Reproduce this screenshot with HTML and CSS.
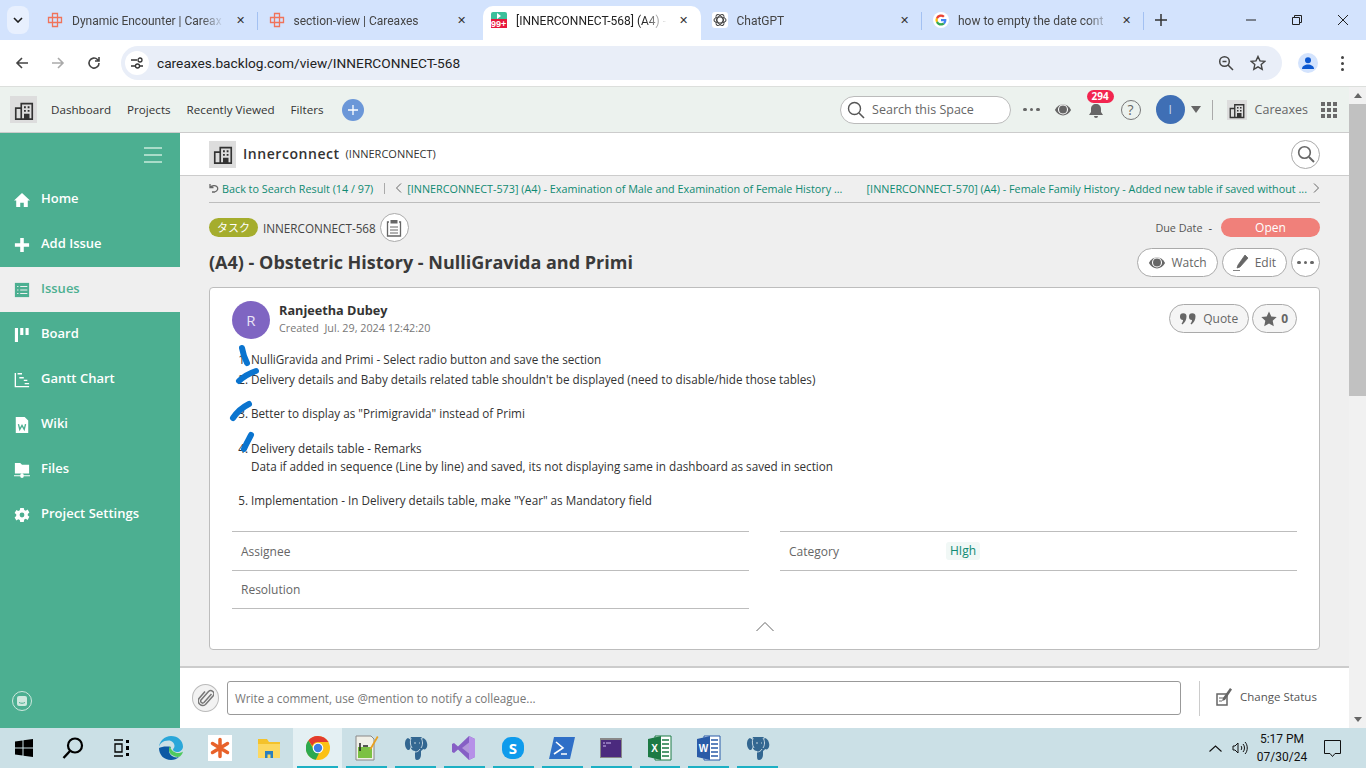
FILE: index.html
```html
<!DOCTYPE html>
<html lang="en">
<head>
<meta charset="UTF-8">
<meta name="viewport" content="width=device-width, initial-scale=1.0">
<title>[INNERCONNECT-568] (A4) - Obstetric History - NulliGravida and Primi</title>
<link rel="stylesheet" href="styles.css">
</head>
<body>
<svg class="defs" width="0" height="0">
    <symbol id="building" viewBox="0 0 24 24">
        <path d="M9 5h12v17H9zM3 10h6v12H3z" fill="none" stroke="currentColor" stroke-width="1.8"/>
        <path d="M12 8h2v2h-2zM16 8h2v2h-2zM12 12h2v2h-2zM16 12h2v2h-2zM12 16h6v6h-6z" fill="currentColor"/>
    </symbol>
    <symbol id="careaxes" viewBox="0 0 16 16">
        <path d="M5.500 1.500h5v4h4v5h-4v4h-5v-4h-4v-5h4zM5.500 5.500h5v5h-5z" fill="none" stroke="#f0735a" stroke-width="1.300"/>
    </symbol>
    <symbol id="elephant" viewBox="0 0 24 26">
        <path d="M4 3C1 4 0 9 2 13c1 2 3 3 4 1l1-9z" fill="#336791"/>
        <path d="M19 3c3 1 5 5 4 9-1 2-2 3-4 2z" fill="#336791"/>
        <path d="M7 2h10c2 1 3 4 3 8 0 3-1 5-3 6v4c0 3-2 5-4 5s-2-2-2-5v-4c-3 0-5-3-5-7 0-3 0-5 1-7z" fill="#336791"/>
        <path d="M7 3c-1 3-1 7 1 10M17 3c2 3 2 7 0 10M11 17c2 0 4-1 5-3M10 8h2M15 8h1" fill="none" stroke="#d5e3ea" stroke-width=".9"/>
    </symbol>
    <symbol id="eye" viewBox="0 0 20 20">
        <path d="M1 10c2-4 5.500-6 9-6s7 2 9 6c-2 4-5.500 6-9 6s-7-2-9-6z" fill="currentColor"/>
        <circle cx="10" cy="9.500" r="5" fill="none" stroke="#fff" stroke-width="1.200"/>
        <circle cx="10" cy="9.500" r="3" fill="currentColor"/>
    </symbol>
</svg>

<div class="tabstrip">
    <div class="tab-menu"><svg width="10" height="6" viewBox="0 0 10 6"><path d="M1 1l4 4 4-4" fill="none" stroke="#1f1f1f" stroke-width="1.600"/></svg></div>
    <div class="tab sep">
        <svg class="favicon" width="16" height="16"><use href="#careaxes"/></svg>
        <span class="tab-title">Dynamic Encounter | Careax</span>
        <span class="tab-close">&#x2715;</span>
    </div>
    <div class="tab">
        <svg class="favicon" width="16" height="16"><use href="#careaxes"/></svg>
        <span class="tab-title">section-view | Careaxes</span>
        <span class="tab-close">&#x2715;</span>
    </div>
    <div class="tab active">
        <svg class="favicon" width="16" height="16" viewBox="0 0 16 16">
            <rect width="16" height="9" rx="2" fill="#3bbf9a"/>
            <path d="M6 1v6l4-3z" fill="#fff"/>
            <rect y="7" width="16" height="9" fill="#e8173d"/>
            <text x="0" y="15" class="favicon-count">99+</text>
        </svg>
        <span class="tab-title">[INNERCONNECT-568] (A4) -</span>
        <span class="tab-close">&#x2715;</span>
    </div>
    <div class="tab sep">
        <svg class="favicon" width="16" height="16" viewBox="0 0 16 16">
            <rect width="16" height="16" rx="3" fill="#fff"/>
            <g fill="none" stroke="#444" stroke-width="1.100">
                <ellipse cx="8" cy="8" rx="6" ry="3"/>
                <ellipse cx="8" cy="8" rx="6" ry="3" transform="rotate(60 8 8)"/>
                <ellipse cx="8" cy="8" rx="6" ry="3" transform="rotate(120 8 8)"/>
            </g>
        </svg>
        <span class="tab-title">ChatGPT</span>
        <span class="tab-close">&#x2715;</span>
    </div>
    <div class="tab sep">
        <svg class="favicon" width="16" height="16" viewBox="0 0 16 16">
            <circle cx="8" cy="8" r="8" fill="#fff"/>
            <path d="M13.400 8.100c0-.4 0-.8-.1-1.200H8v2.300h3a2.600 2.600 0 0 1-1.100 1.700l1.800 1.400c1-1 1.700-2.400 1.700-4.200z" fill="#4285f4"/>
            <path d="M8 13.500c1.500 0 2.700-.5 3.700-1.300l-1.800-1.400c-.5.300-1.100.5-1.900.5-1.400 0-2.700-1-3.100-2.300L3 10.400c.9 1.900 2.800 3.100 5 3.100z" fill="#34a853"/>
            <path d="M4.900 9a3.300 3.300 0 0 1 0-2L3 5.600a5.500 5.500 0 0 0 0 4.800z" fill="#fbbc05"/>
            <path d="M8 4.700c.8 0 1.500.3 2.100.8l1.600-1.600A5.500 5.500 0 0 0 3 5.600L4.900 7C5.300 5.700 6.600 4.700 8 4.700z" fill="#ea4335"/>
        </svg>
        <span class="tab-title">how to empty the date cont</span>
        <span class="tab-close">&#x2715;</span>
    </div>
    <div class="tab-new"><svg width="12" height="12" viewBox="0 0 12 12"><path d="M6 0v12M0 6h12" stroke="#333" stroke-width="1.500"/></svg></div>
    <div class="win-controls">
        <svg width="10" height="10" viewBox="0 0 10 10"><path d="M0 5h10" stroke="#222"/></svg>
        <svg width="10" height="10" viewBox="0 0 10 10"><path d="M.5 2.500h7v7h-7zM2.500 2.500v-2h7v7h-2" fill="none" stroke="#222"/></svg>
        <svg width="10" height="10" viewBox="0 0 10 10"><path d="M0 0l10 10M10 0L0 10" stroke="#222"/></svg>
    </div>
</div>

<div class="toolbar">
    <svg width="16" height="16" viewBox="0 0 16 16"><path d="M14 8H3M8 3L3 8l5 5" fill="none" stroke="#444" stroke-width="1.600"/></svg>
    <svg width="16" height="16" viewBox="0 0 16 16"><path d="M2 8h11M8 3l5 5-5 5" fill="none" stroke="#aaa" stroke-width="1.600"/></svg>
    <svg width="16" height="16" viewBox="0 0 16 16"><path d="M13 8a5 5 0 1 1-1.500-3.500L13 6M13 2v4H9" fill="none" stroke="#444" stroke-width="1.600"/></svg>
    <div class="omnibox">
        <span class="site-info">
            <svg width="14" height="14" viewBox="0 0 14 14"><path d="M1 4h6M10 10h3M1 10h4" stroke="#333" stroke-width="1.400"/><circle cx="10" cy="4" r="2" fill="none" stroke="#333" stroke-width="1.300"/><circle cx="7.500" cy="10" r="2" fill="none" stroke="#333" stroke-width="1.300"/></svg>
        </span>
        <span class="url">careaxes.backlog.com/view/INNERCONNECT-568</span>
        <svg class="omni-zoom" width="16" height="16" viewBox="0 0 16 16"><circle cx="6.500" cy="6.500" r="4.800" fill="none" stroke="#444" stroke-width="1.500"/><path d="M10 10l5 5M4.500 6.500h4" stroke="#444" stroke-width="1.500"/></svg>
        <svg class="omni-star" width="16" height="16" viewBox="0 0 16 16"><path d="M8 1.500l2 4.400 4.700.5-3.500 3.200 1 4.700L8 11.900l-4.200 2.400 1-4.700L1.300 6.400 6 5.900z" fill="none" stroke="#444" stroke-width="1.400"/></svg>
    </div>
    <span class="profile"><svg width="14" height="14" viewBox="0 0 14 14"><circle cx="7" cy="4.200" r="3" fill="#0b57d0"/><path d="M1 13c0-3 3-4.500 6-4.500s6 1.500 6 4.500z" fill="#0b57d0"/></svg></span>
    <span class="kebab"><i></i><i></i><i></i></span>
</div>

<div class="page">
    <div class="app">
        <header class="topnav">
            <span class="space-icon"><svg width="22" height="22"><use href="#building"/></svg></span>
            <nav class="topnav-links">
                <a>Dashboard</a>
                <a>Projects</a>
                <a>Recently Viewed</a>
                <a>Filters</a>
            </nav>
            <span class="plus-btn"><svg width="12" height="12" viewBox="0 0 12 12"><path d="M6 1v10M1 6h10" stroke="#fff" stroke-width="1.300"/></svg></span>
            <div class="topnav-right">
                <div class="search">
                    <svg width="18" height="18" viewBox="0 0 18 18"><circle cx="7.500" cy="7.500" r="6" fill="none" stroke="#555" stroke-width="1.400"/><path d="M12 12l5 5" stroke="#555" stroke-width="1.600"/></svg>
                    <span>Search this Space</span>
                </div>
                <span class="dots"><i></i><i></i><i></i></span>
                <svg class="top-eye" width="18" height="18"><use href="#eye"/></svg>
                <span class="bell">
                    <svg width="18" height="18" viewBox="0 0 18 18"><path d="M9 3c3 0 5 2 5 5v3l2 3H2l2-3V8c0-3 2-5 5-5zM7 15h4a2 2 0 0 1-4 0z" fill="#666"/></svg>
                    <b class="bell-count">294</b>
                </span>
                <span class="help">?</span>
                <span class="user-avatar">I</span>
                <span class="caret"></span>
                <span class="vline"></span>
                <span class="space-icon small"><svg width="18" height="18"><use href="#building"/></svg></span>
                <span class="space-name">Careaxes</span>
                <span class="apps"><i></i><i></i><i></i><i></i><i></i><i></i><i></i><i></i><i></i></span>
            </div>
        </header>

        <div class="body-row">
            <aside class="sidebar">
                <div class="burger"><i></i><i></i><i></i></div>
                <a class="side-item">
                    <svg viewBox="0 0 18 18"><path d="M9 1L0 9.500h2.500V17h4.500v-5h4v5h4.500V9.500H18z" fill="currentColor"/></svg>
                    Home
                </a>
                <a class="side-item">
                    <svg viewBox="0 0 18 18"><path d="M7 1h4v6h6v4h-6v6H7v-6H1V7h6z" fill="currentColor"/></svg>
                    Add Issue
                </a>
                <a class="side-item current">
                    <svg viewBox="0 0 18 18"><rect x="1" y="1" width="16" height="16" fill="currentColor"/><path d="M3.500 5h1.500M7 5h8M3.500 9h1.500M7 9h8M3.500 13h1.500M7 13h8" stroke="#efefef" stroke-width="1.200"/></svg>
                    Issues
                </a>
                <a class="side-item">
                    <svg viewBox="0 0 18 18"><path d="M1 1h3.500v16H1zM7 1h3.500v8H7zM13 1h3.500v8H13z" fill="currentColor"/></svg>
                    Board
                </a>
                <a class="side-item">
                    <svg viewBox="0 0 18 18"><path d="M1.500 1v15.500H17M4 2h5M6 6.500h5M11 9.500h4M12 13h5" fill="none" stroke="currentColor" stroke-width="1.500"/></svg>
                    Gantt Chart
                </a>
                <a class="side-item">
                    <svg viewBox="0 0 18 18"><path d="M2 0h10l4 4v14H2z" fill="currentColor"/><path d="M5 8l1.500 6L9 9.500l2.500 4.500L13 8" fill="none" stroke="#4caf91" stroke-width="1.500"/></svg>
                    Wiki
                </a>
                <a class="side-item">
                    <svg viewBox="0 0 18 18"><path d="M1 1h6l2 2h8v10H1zM0 15h7a2 2 0 0 1 4 0h7v1h-7a2 2 0 0 1-4 0H0z" fill="currentColor"/></svg>
                    Files
                </a>
                <a class="side-item">
                    <svg viewBox="0 0 18 18"><path d="M7 1h4l.5 2.300 1.800.8 2-1.200 2 3.400-1.800 1.500v1.800l1.800 1.500-2 3.400-2-1.200-1.800.8L11 17H7l-.5-2.300-1.800-.8-2 1.200-2-3.400 1.800-1.500V8.200L.7 6.700l2-3.400 2 1.200 1.800-.8z" fill="currentColor"/><circle cx="9" cy="9" r="2.700" fill="#4caf91"/></svg>
                    Project Settings
                </a>
                <div class="side-chat">
                    <svg width="20" height="20" viewBox="0 0 20 20"><circle cx="10" cy="10" r="9.500" fill="none" stroke="#cfe9df"/><rect x="5" y="5" width="10" height="10" rx="2" fill="#cfe9df"/><path d="M7 11.500c2 1 4 1 6 0" stroke="#4caf91" fill="none"/></svg>
                </div>
            </aside>

            <main class="main">
                <div class="project-bar">
                    <span class="space-icon"><svg width="22" height="22"><use href="#building"/></svg></span>
                    <span class="project-name">Innerconnect</span>
                    <span class="project-key">(INNERCONNECT)</span>
                    <span class="round-btn project-search">
                        <svg width="18" height="18" viewBox="0 0 18 18"><circle cx="7.500" cy="7.500" r="5.800" fill="none" stroke="#666" stroke-width="1.600"/><path d="M12 12l5 5" stroke="#666" stroke-width="2"/></svg>
                    </span>
                </div>

                <div class="content">
                    <div class="pager">
                        <svg width="10" height="10" viewBox="0 0 10 10"><path d="M1 1v3.500h3.500M1.500 4C3 2.500 6 2 7.800 3.500c1.700 1.500 1.200 4.500-2 5.500H3" fill="none" stroke="#666" stroke-width="1.300"/></svg>
                        <a class="back-link">Back to Search Result (14 / 97)</a>
                        <span class="pager-sep"></span>
                        <svg width="7" height="10" viewBox="0 0 7 10"><path d="M6 .5L1.500 5 6 9.500" fill="none" stroke="#666"/></svg>
                        <a class="prev-link">[INNERCONNECT-573] (A4) - Examination of Male and Examination of Female History ...</a>
                        <a class="next-link">[INNERCONNECT-570] (A4) - Female Family History - Added new table if saved without ...</a>
                        <svg width="7" height="10" viewBox="0 0 7 10"><path d="M1 .5L5.500 5 1 9.500" fill="none" stroke="#666"/></svg>
                    </div>

                    <div class="issue-meta">
                        <span class="type-tag">タスク</span>
                        <span class="issue-key">INNERCONNECT-568</span>
                        <span class="round-btn clip-btn">
                            <svg width="16" height="18" viewBox="0 0 16 18"><path d="M3 3H1.500v14h13V3H13" fill="none" stroke="#666" stroke-width="1.300"/><rect x="4.500" y="1" width="7" height="3.500" fill="#666"/><path d="M4 8h8M4 11h8M4 14h8" stroke="#666"/></svg>
                        </span>
                        <span class="due-label">Due Date</span>
                        <span class="due-value">-</span>
                        <span class="status-pill">Open</span>
                    </div>

                    <div class="title-row">
                        <h1>(A4) - Obstetric History - NulliGravida and Primi</h1>
                        <div class="title-actions">
                            <span class="pill-btn"><svg class="btn-eye" width="18" height="18"><use href="#eye"/></svg>Watch</span>
                            <span class="pill-btn"><svg width="16" height="16" viewBox="0 0 16 16"><path d="M12 0l3 3-8 9-3 1 1-3zM0 15.500h7" fill="#666" stroke="#666" stroke-width=".8"/></svg>Edit</span>
                            <span class="round-btn more-btn"><i></i><i></i><i></i></span>
                        </div>
                    </div>

                    <article class="card">
                        <div class="card-head">
                            <span class="author-avatar">R</span>
                            <div class="author">
                                <strong>Ranjeetha Dubey</strong>
                                <span>Created &nbsp;Jul. 29, 2024 12:42:20</span>
                            </div>
                            <div class="card-actions">
                                <span class="pill-btn light"><svg width="16" height="12" viewBox="0 0 16 12"><path d="M0 3.500a3.200 3.200 0 1 1 6.500 0c0 3-1.500 6-4 8L1.500 10.500C2.500 9.500 3 8.300 3 7a3.300 3.300 0 0 1-3-3.500zM9 3.500a3.200 3.200 0 1 1 6.500 0c0 3-1.500 6-4 8l-1-1c1-1 1.500-2.200 1.500-3.500A3.300 3.300 0 0 1 9 3.500z" fill="#666"/></svg>Quote</span>
                                <span class="pill-btn light star"><svg width="16" height="16" viewBox="0 0 16 16"><path d="M8 .5l2.300 5 5.400.6-4 3.700 1.100 5.400L8 12.500l-4.800 2.700 1.100-5.400-4-3.700 5.400-.6z" fill="#666"/></svg>0</span>
                            </div>
                        </div>

                        <div class="desc">
                            <ol>
                                <li class="tight">NulliGravida and Primi - Select radio button and save the section</li>
                                <li>Delivery details and Baby details related table shouldn't be displayed (need to disable/hide those tables)</li>
                                <li class="wide">Better to display as "Primigravida" instead of Primi</li>
                                <li>Delivery details table - Remarks<br>Data if added in sequence (Line by line) and saved, its not displaying same in dashboard as saved in section</li>
                                <li>Implementation - In Delivery details table, make "Year" as Mandatory field</li>
                            </ol>
                            <!-- pen marks drawn over the numbers -->
                            <svg class="pen-marks" width="60" height="110" viewBox="0 0 60 110">
                                <g fill="none" stroke="#0a74cf" stroke-width="6" stroke-linecap="round">
                                    <path d="M14 4c1 6 3 11 5 15"/>
                                    <path d="M11 37c5-5 11-8 17-10"/>
                                    <path d="M5 74c4-6 10-11 16-14"/>
                                    <path d="M16 105c2-5 5-10 7-14"/>
                                </g>
                            </svg>
                        </div>

                        <div class="fields">
                            <div class="field-col">
                                <div class="field"><span class="field-name">Assignee</span></div>
                                <div class="field short"><span class="field-name">Resolution</span></div>
                            </div>
                            <div class="field-col">
                                <div class="field"><span class="field-name">Category</span><span class="chip">HIgh</span></div>
                            </div>
                        </div>

                        <div class="collapse">
                            <svg width="18" height="10" viewBox="0 0 18 10"><path d="M.5 10L9 1.500 17.500 10" fill="none" stroke="#666"/></svg>
                        </div>
                    </article>
                </div>

                <div class="comment-bar">
                    <span class="attach-btn">
                        <svg width="16" height="18" viewBox="0 0 16 18"><path d="M13.500 4.500L6 13a2 2 0 0 1-3-2.600L10.500 2a3.200 3.200 0 0 1 4.700 4.300L7.500 15a4.500 4.500 0 0 1-6.500-6l6-7" fill="none" stroke="#777" stroke-width="1.500" transform="translate(0 .5)"/></svg>
                    </span>
                    <div class="comment-input">Write a comment, use @mention to notify a colleague...</div>
                    <span class="comment-sep"></span>
                    <span class="change-status">
                        <svg width="17" height="18" viewBox="0 0 17 18"><path d="M1 6h10v11H1z" fill="#fff" stroke="#666" stroke-width="1.500"/><path d="M3 10h5M3 13h3" stroke="#666"/><path d="M14 0l2 1.500L9 12l-3 1 1-3z" fill="#666"/></svg>
                        Change Status
                    </span>
                </div>
            </main>
        </div>
    </div>

    <div class="scrollbar">
        <span class="arrow up"></span>
        <span class="thumb"></span>
        <span class="arrow down"></span>
    </div>
</div>

<footer class="taskbar">
    <span class="task"><svg width="18" height="18" viewBox="0 0 18 18"><path d="M0 2.500l7.500-1v7H0zM8.500 1.300L18 0v8.500H8.500zM0 9.500h7.500v7l-7.500-1zM8.500 9.500H18V18l-9.500-1.300z" fill="#000"/></svg></span>
    <span class="task"><svg width="24" height="24" viewBox="0 0 24 24"><circle cx="14" cy="9.500" r="7" fill="none" stroke="#000" stroke-width="2.200"/><path d="M9 15l-6.500 7" stroke="#000" stroke-width="2.400"/></svg></span>
    <span class="task"><svg width="18" height="18" viewBox="0 0 18 18"><path d="M1 1h9M1 17h9M2 5h7v8H2z" fill="none" stroke="#000" stroke-width="1.300"/><path d="M13 1h3v3h-3zM13 7h3v4h-3zM13 14h3v3h-3z" fill="#000"/></svg></span>
    <span class="task"><svg width="26" height="26" viewBox="0 0 26 26"><path d="M1 13C1 6 6.500 1 13 1c7 0 12 5 12 10.500 0 3.500-3 5.500-6 5.500-2 0-4-1-4-2.500 0-1 1.500-1.500 1.500-3.500 0-3-2.500-5.500-6-5.500C5 5.500 1 9 1 13z" fill="#2aa7d9"/><path d="M1 13c0 7 5 12 12 12 3 0 6-1 8-3-3 1-7 0-9-3-1.500-2-1-5 1-7-5-1-10 0-12 1z" fill="#0c59a4"/><path d="M12 11c-2 3-1 7 2 9 3 2 6 2.500 8 1.500 1.500-1.500 2.500-3 3-5-2 1.500-5 2-7.500 1-3-1-5-3.500-5.500-6.500z" fill="#4fc95e"/></svg></span>
    <span class="task"><span class="zoho"><svg width="22" height="22" viewBox="0 0 22 22"><g stroke="#e8622a" stroke-width="3.500" stroke-linecap="round"><path d="M11 2.500v17M3.500 6.500l15 9M18.500 6.500l-15 9"/></g></svg></span></span>
    <span class="task"><svg width="24" height="22" viewBox="0 0 24 22"><path d="M1 2h9l2 3h11v16H1z" fill="#f4c22b"/><path d="M1 7h22v14H1z" fill="#fcd860"/><path d="M8 14h8v7h-2.500v-3.500h-3V21H8z" fill="#2a7fbf"/></svg></span>
    <span class="task active running"><svg width="24" height="24" viewBox="0 0 24 24"><circle cx="12" cy="12" r="12" fill="#fbc116"/><path d="M12 0a12 12 0 0 1 10.400 6H12a6 6 0 0 0-5.700 4L2.400 4.400A12 12 0 0 1 12 0z" fill="#e33b2e"/><path d="M2.400 4.400L7.500 13a5 5 0 0 0 6 3l-3.700 7.800A12 12 0 0 1 2.400 4.400z" fill="#2da94f"/><circle cx="12" cy="12" r="5.300" fill="#fff"/><circle cx="12" cy="12" r="4.200" fill="#3d7de4"/></svg></span>
    <span class="task running"><svg width="24" height="26" viewBox="0 0 24 26"><path d="M1 1h15l3 3v21H1z" fill="#f0f0e8" stroke="#888"/><rect x="3" y="12" width="14" height="11" fill="#7cc143"/><path d="M5 8v8M8 11h5" stroke="#222" stroke-width="1.500"/><path d="M22 1l1.500 1-7 12-2 1 .5-2z" fill="#e8a020"/></svg></span>
    <span class="task running"><svg width="24" height="26"><use href="#elephant"/></svg></span>
    <span class="task running"><svg width="24" height="26" viewBox="0 0 24 26"><path d="M17 1l6 3v18l-6 3-11-10.500L2 18l-2-1V9l2-1 4 3.500z" fill="#865fc5"/><path d="M17 7.500v11L10 13z" fill="#f2ecfb" opacity=".4"/><path d="M17 1l6 3v18l-6 3z" fill="#b690e8"/></svg></span>
    <span class="task running"><svg width="24" height="26" viewBox="0 0 24 26"><rect x="1" y="2" width="22" height="22" rx="9" fill="#0f9bec"/><text x="12" y="19" class="skype-s">S</text></svg></span>
    <span class="task running"><svg width="26" height="24" viewBox="0 0 26 24"><path d="M5 1h21l-5 22H0z" fill="#2f6fc7"/><path d="M7 6l7 6-9 6M12 18h6" fill="none" stroke="#fff" stroke-width="1.600"/></svg></span>
    <span class="task running"><svg width="22" height="20" viewBox="0 0 22 20"><rect width="22" height="20" fill="#888"/><rect x="1" y="2" width="20" height="17" fill="#4b2a7e"/><path d="M3 5h2M6 5h5M3 8h3" stroke="#cdb8f0"/></svg></span>
    <span class="task running"><svg width="24" height="26" viewBox="0 0 24 26"><path d="M7 1h16v24H7z" fill="#fff" stroke="#1d7a45"/><path d="M14 5h7M14 9h7M14 13h7M14 17h7M14 21h7" stroke="#1d7a45" stroke-width="1.500"/><path d="M0 4l13-3v24L0 22z" fill="#1d7a45"/><text x="6.500" y="17" class="office-l">X</text></svg></span>
    <span class="task running"><svg width="24" height="26" viewBox="0 0 24 26"><path d="M7 1h16v24H7z" fill="#fff" stroke="#2a5ba8"/><path d="M14 5h7M14 9h7M14 13h7M14 17h7M14 21h7" stroke="#2a5ba8" stroke-width="1.500"/><path d="M0 4l13-3v24L0 22z" fill="#2a5ba8"/><text x="6.500" y="17" class="office-l">W</text></svg></span>
    <span class="task running"><svg width="24" height="26"><use href="#elephant"/></svg></span>
    <div class="tray">
        <svg width="13" height="7" viewBox="0 0 13 7"><path d="M.5 6.500L6.500 1l6 5.500" fill="none" stroke="#111" stroke-width="1.100"/></svg>
        <svg width="16" height="14" viewBox="0 0 16 14"><path d="M1 5h2l3-3v10L3 9H1z" fill="none" stroke="#111"/><path d="M9 5c1 1 1 3 0 4M11 3c2 2 2 6 0 8M13 1c3 3 3 9 0 12" fill="none" stroke="#111"/></svg>
        <div class="clock"><span>5:17 PM</span><span>07/30/24</span></div>
        <svg class="notify" width="17" height="17" viewBox="0 0 17 17"><path d="M.5.500h16v13H11l-2.500 3-2.500-3H.5z" fill="none" stroke="#111"/></svg>
    </div>
</footer>
</body>
</html>
```

FILE: styles.css
```css
:root {
    --green: #4caf91;
    --link: #0f8a72;
    --line: #bdbdbd;
    --text: #333;
    --muted: #666;
    --panel: #efefef;
}

* {
    box-sizing: border-box;
}

html, body {
    height: 100%;
}

body {
    margin: 0;
    width: 1366px;
    height: 768px;
    overflow: hidden;
    display: flex;
    flex-direction: column;
    font-family: "Open Sans", "Noto Sans CJK JP", sans-serif;
    color: var(--text);
    background: #fff;
}

.defs {
    position: absolute;
}

svg {
    flex: none;
    display: block;
}

/* browser chrome */
.tabstrip {
    height: 40px;
    display: flex;
    align-items: flex-end;
    background: #d3e3fd;
    font-family: Roboto, sans-serif;
    font-size: 12px;
    color: #444;
}

.tab-menu {
    width: 22px;
    height: 28px;
    margin: 0 7px 6px;
    border-radius: 8px;
    background: #e8f0fe;
    display: flex;
    align-items: center;
    justify-content: center;
}

.tab {
    width: 221.500px;
    height: 40px;
    padding: 0 9.500px 0 11px;
    display: flex;
    align-items: center;
    position: relative;
}

.tab.active {
    width: 217.500px;
    height: 34px;
    margin-left: 4px;
    padding-left: 8px;
    padding-bottom: 6px;
    background: #fff;
    border-radius: 10px 10px 0 0;
    color: #222;
}

.tab.sep::after {
    content: "";
    position: absolute;
    right: 0;
    top: 12px;
    height: 18px;
    width: 1px;
    background: #a3c1f2;
}

.favicon {
    margin-right: 9px;
}

.favicon-count {
    font: bold 9px "Liberation Sans", sans-serif;
    fill: #fff;
}

.tab-title {
    flex: 1;
    padding-top: 2px;
    white-space: nowrap;
    overflow: hidden;
    -webkit-mask-image: linear-gradient(to right, #000 85%, transparent);
    mask-image: linear-gradient(to right, #000 85%, transparent);
}

.tab-close {
    width: 16px;
    margin-left: 8px;
    font-size: 11px;
    text-align: center;
    color: #333;
}

.tab-new {
    height: 40px;
    margin-left: 11px;
    display: flex;
    align-items: center;
}

.win-controls {
    margin-left: auto;
    height: 40px;
    width: 120px;
    padding-right: 18px;
    display: flex;
    align-items: center;
    justify-content: space-between;
}

.toolbar {
    height: 47px;
    padding-left: 14px;
    display: flex;
    align-items: center;
    gap: 20px;
    background: #fff;
    border-bottom: 1px solid #dcdfdc;
}

.omnibox {
    width: 1161px;
    height: 34px;
    margin-left: -1px;
    padding-left: 4px;
    border-radius: 17px;
    background: #e9eef8;
    display: flex;
    align-items: center;
}

.site-info {
    width: 24px;
    height: 24px;
    margin-right: 8px;
    border-radius: 50%;
    background: #fff;
    display: flex;
    align-items: center;
    justify-content: center;
}

.url {
    flex: 1;
    font-family: Roboto, sans-serif;
    font-size: 13.700px;
    color: #222;
}

.omni-zoom {
    margin-right: 16px;
}

.omni-star {
    margin-right: 16px;
}

.profile {
    width: 20px;
    height: 20px;
    margin-left: -4px;
    border-radius: 50%;
    background: #d3e3fd;
    display: flex;
    align-items: center;
    justify-content: center;
}

.kebab {
    margin-left: 3px;
    display: flex;
    flex-direction: column;
    gap: 3px;
}

.kebab i {
    width: 3px;
    height: 3px;
    border-radius: 50%;
    background: #444;
}

/* page and its window scrollbar */
.page {
    height: 641px;
    display: flex;
}

.app {
    width: 1349px;
    display: flex;
    flex-direction: column;
}

.scrollbar {
    width: 17px;
    background: #f1f1f1;
    display: flex;
    flex-direction: column;
    align-items: center;
}

.thumb {
    width: 100%;
    height: 292px;
    margin-top: 6px;
    background: #c1c1c1;
}

.arrow {
    width: 0;
    height: 0;
    border-left: 4px solid transparent;
    border-right: 4px solid transparent;
}

.arrow.up {
    margin-top: 6px;
    border-bottom: 5px solid #666;
}

.arrow.down {
    margin-top: auto;
    margin-bottom: 6px;
    border-top: 5px solid #666;
}

.topnav {
    height: 46px;
    padding: 0 12px 0 10px;
    display: flex;
    align-items: center;
    background: #ecf2ee;
    border-bottom: 1px solid #ccc;
    font-size: 11.650px;
}

.space-icon {
    width: 27px;
    height: 27px;
    background: #ddd;
    color: #333;
    display: flex;
    align-items: center;
    justify-content: center;
}

.space-icon.small {
    width: 20px;
    height: 20px;
    margin-right: 8px;
}

.topnav-links {
    margin-left: 14px;
    display: flex;
    gap: 16px;
    color: #333;
}

.plus-btn {
    width: 22px;
    height: 22px;
    margin-left: 18px;
    border-radius: 50%;
    background: #6b97d8;
    display: flex;
    align-items: center;
    justify-content: center;
}

.topnav-right {
    margin-left: auto;
    display: flex;
    align-items: center;
}

.search {
    width: 171px;
    height: 28px;
    padding-left: 6px;
    border: 1px solid #bbb;
    border-radius: 14px;
    background: #fff;
    display: flex;
    align-items: center;
    gap: 7px;
    font-size: 12.500px;
    color: #666;
}

.dots, .more-btn {
    display: flex;
    gap: 3px;
    align-items: center;
}

.dots {
    margin-left: 12px;
}

.dots i, .more-btn i {
    width: 3.500px;
    height: 3.500px;
    border-radius: 50%;
    background: #666;
}

.top-eye {
    margin-left: 14px;
    color: #666;
}

.bell {
    margin-left: 15px;
    position: relative;
}

.bell-count {
    position: absolute;
    top: -11px;
    left: 0;
    padding: 0 5px;
    border-radius: 7px;
    background: #f2254f;
    color: #fff;
    font-size: 10px;
    line-height: 13px;
}

.help {
    width: 20px;
    height: 20px;
    margin-left: 16px;
    border: 1px solid #777;
    border-radius: 50%;
    text-align: center;
    font-size: 14px;
    line-height: 18px;
    color: #666;
}

.user-avatar {
    width: 29px;
    height: 29px;
    margin-left: 15px;
    border-radius: 50%;
    background: #3f6fb5;
    color: #c9d8ee;
    font-size: 12px;
    line-height: 29px;
    text-align: center;
}

.caret {
    margin-left: 6px;
    border-left: 5.500px solid transparent;
    border-right: 5.500px solid transparent;
    border-top: 7px solid #666;
}

.vline {
    width: 1px;
    height: 20px;
    margin: 0 14px 0 11px;
    background: #aaa;
}

.space-name {
    font-size: 12.500px;
    color: #666;
}

.apps {
    width: 16px;
    margin-left: 13px;
    display: grid;
    grid-template-columns: repeat(3, 4px);
    gap: 2px;
}

.apps i {
    height: 4px;
    background: #6a6a6a;
}

.body-row {
    flex: 1;
    display: flex;
    min-height: 0;
}

/* left menu */
.sidebar {
    width: 180px;
    background: var(--green);
    color: #fff;
    display: flex;
    flex-direction: column;
    padding-top: 14px;
}

.burger {
    width: 18px;
    height: 16px;
    margin: 0 0 14px 144px;
    display: flex;
    flex-direction: column;
    justify-content: space-between;
}

.burger i {
    height: 2px;
    background: #a9dcc9;
}

.side-item {
    height: 45px;
    padding: 0 0 4px 14px;
    display: flex;
    align-items: center;
    gap: 11px;
    font-size: 13px;
    font-weight: 600;
}

.side-item svg {
    width: 16px;
    height: 16px;
    margin-top: 5px;
}

.side-item.current {
    background: var(--panel);
    color: var(--green);
}

.side-chat {
    margin: auto 0 17px 12px;
}

/* main column */
.main {
    width: 1169px;
    display: flex;
    flex-direction: column;
    background: var(--panel);
}

.project-bar {
    height: 43px;
    padding: 0 29px;
    background: #fff;
    border-bottom: 1px solid #ccc;
    display: flex;
    align-items: center;
}

.project-name {
    margin-left: 7px;
    padding-bottom: 2px;
    font-size: 14px;
    font-weight: 600;
    letter-spacing: .55px;
}

.project-key {
    margin-left: 6px;
    padding-bottom: 2px;
    font-size: 11px;
}

.round-btn {
    width: 29px;
    height: 29px;
    border: 1px solid #aaa;
    border-radius: 50%;
    background: #fff;
    display: flex;
    align-items: center;
    justify-content: center;
}

.project-search {
    margin-left: auto;
}

.content {
    flex: 1;
    padding: 0 29px;
}

.pager {
    height: 27px;
    padding-bottom: 2px;
    border-bottom: 1px solid var(--line);
    display: flex;
    align-items: center;
    font-size: 10.800px;
    color: var(--link);
    white-space: nowrap;
}

.back-link {
    margin-left: 3px;
}

.pager-sep {
    width: 1px;
    height: 11px;
    margin: 0 10px 0 11px;
    background: #aaa;
}

.prev-link {
    margin-left: 5px;
}

.next-link {
    margin-left: auto;
    margin-right: 6px;
}

.issue-meta {
    height: 29px;
    margin-top: 10px;
    display: flex;
    align-items: center;
}

.type-tag {
    width: 49px;
    height: 19px;
    border-radius: 10px;
    background: #a5ad2d;
    color: #fff;
    font-size: 11px;
    line-height: 19px;
    text-align: center;
}

.issue-key {
    margin-left: 5px;
    padding-top: 1px;
    font-size: 11.700px;
    color: #444;
}

.clip-btn {
    margin-left: 4px;
}

.due-label {
    margin-left: auto;
    font-size: 10.800px;
    color: #555;
}

.due-value {
    margin: 0 9px 0 6px;
    font-size: 11px;
}

.status-pill {
    width: 99px;
    height: 19px;
    border-radius: 10px;
    background: #f0807a;
    color: #fff;
    font-size: 12px;
    line-height: 20px;
    text-align: center;
}

.title-row {
    height: 29px;
    margin-top: 6px;
    display: flex;
    align-items: center;
}

h1 {
    margin: 0;
    padding-bottom: 2px;
    font-size: 18px;
    font-weight: 700;
    color: #3a3a3a;
}

.title-actions {
    margin-left: auto;
    display: flex;
    gap: 4px;
}

.pill-btn {
    height: 29px;
    padding: 0 10px;
    border: 1px solid #aaa;
    border-radius: 15px;
    background: #fff;
    display: flex;
    align-items: center;
    gap: 6px;
    font-size: 12px;
    color: #666;
}

.btn-eye {
    color: #666;
}

.more-btn {
    gap: 3px;
}

.card {
    height: 363px;
    margin-top: 10px;
    padding: 13px 22px 0;
    border: 1px solid var(--line);
    border-radius: 4px;
    background: #fff;
}

.card-head {
    display: flex;
    align-items: flex-start;
}

.author-avatar {
    width: 38px;
    height: 38px;
    border-radius: 50%;
    background: #7f65c2;
    color: #e8e2f6;
    font-size: 15px;
    line-height: 38px;
    text-align: center;
}

.author {
    margin-left: 9px;
    display: flex;
    flex-direction: column;
    font-size: 10.800px;
    color: #777;
}

.author strong {
    font-size: 12.700px;
    font-weight: 700;
    line-height: 18px;
    color: #333;
}

.author span {
    margin-top: 1px;
    line-height: 16px;
}

.card-actions {
    margin-left: auto;
    margin-top: 3px;
    display: flex;
    gap: 3px;
}

.pill-btn.light {
    background: #f5f5f5;
    gap: 7px;
}

.pill-btn.star {
    padding: 0 8px;
    gap: 4px;
    font-weight: 700;
}

.desc {
    position: relative;
    margin-top: 11px;
    font-size: 11.700px;
    line-height: 18px;
    color: #333;
}

.desc ol {
    margin: 0;
    padding-left: 19px;
}

.desc li {
    margin-bottom: 16px;
}

.desc li.tight {
    margin-bottom: 2px;
}

.desc li.wide {
    margin-bottom: 17px;
}

/* overlay: hand-drawn ticks on the screenshot */
.pen-marks {
    position: absolute;
    left: -4px;
    top: -6px;
}

.fields {
    margin-top: 22px;
    display: grid;
    grid-template-columns: 517px 517px;
    column-gap: 31px;
}

.field {
    height: 40px;
    padding-left: 9px;
    border-top: 1px solid var(--line);
    border-bottom: 1px solid var(--line);
    display: flex;
    align-items: center;
    font-size: 12px;
    color: #666;
}

.field.short {
    height: 38px;
    border-top: 0;
}

.field-name {
    width: 157px;
}

.chip {
    padding: 0 4px;
    border-radius: 3px;
    background: #f1f8f6;
    color: var(--link);
    line-height: 18px;
}

.collapse {
    margin-top: 12px;
    display: flex;
    justify-content: center;
}

.comment-bar {
    height: 62px;
    padding: 0 31px 0 12px;
    background: #fff;
    border-top: 2px solid #ccc;
    display: flex;
    align-items: center;
}

.attach-btn {
    width: 27px;
    height: 28px;
    border: 1px solid #bbb;
    border-radius: 50%;
    background: #f2f2f2;
    display: flex;
    align-items: center;
    justify-content: center;
}

.comment-input {
    width: 954px;
    height: 34px;
    margin-left: 8px;
    padding-left: 7px;
    border: 1px solid #999;
    border-radius: 3px;
    font-size: 11.700px;
    line-height: 33px;
    color: #777;
}

.comment-sep {
    width: 1px;
    height: 35px;
    margin-left: 18px;
    background: #ccc;
}

.change-status {
    margin-left: 16px;
    padding-bottom: 3px;
    display: flex;
    align-items: center;
    gap: 7px;
    font-size: 11.500px;
    color: #555;
    white-space: nowrap;
}

/* windows taskbar */
.taskbar {
    height: 40px;
    display: flex;
    background: #cbe0e6;
}

.task {
    width: 48.900px;
    height: 40px;
    display: flex;
    align-items: center;
    justify-content: center;
    position: relative;
}

.task.active {
    background: #e4f0f3;
}

.task.running::after {
    content: "";
    position: absolute;
    left: 4px;
    right: 4px;
    bottom: 0;
    height: 2px;
    background: #1cb0c4;
}

.zoho {
    width: 24px;
    height: 26px;
    background: #fff;
    display: flex;
    align-items: center;
    justify-content: center;
}

.skype-s {
    font: bold 15px "Open Sans", sans-serif;
    fill: #fff;
    text-anchor: middle;
}

.office-l {
    font: bold 10px "Liberation Sans", sans-serif;
    fill: #fff;
    text-anchor: middle;
}

.tray {
    margin-left: auto;
    display: flex;
    align-items: center;
    padding-right: 25px;
    gap: 10px;
}

.clock {
    width: 46px;
    margin-left: 1px;
    display: flex;
    flex-direction: column;
    align-items: center;
    font-family: Roboto, sans-serif;
    font-size: 12px;
    line-height: 18px;
    color: #111;
}

.notify {
    margin-left: 9px;
}
```
